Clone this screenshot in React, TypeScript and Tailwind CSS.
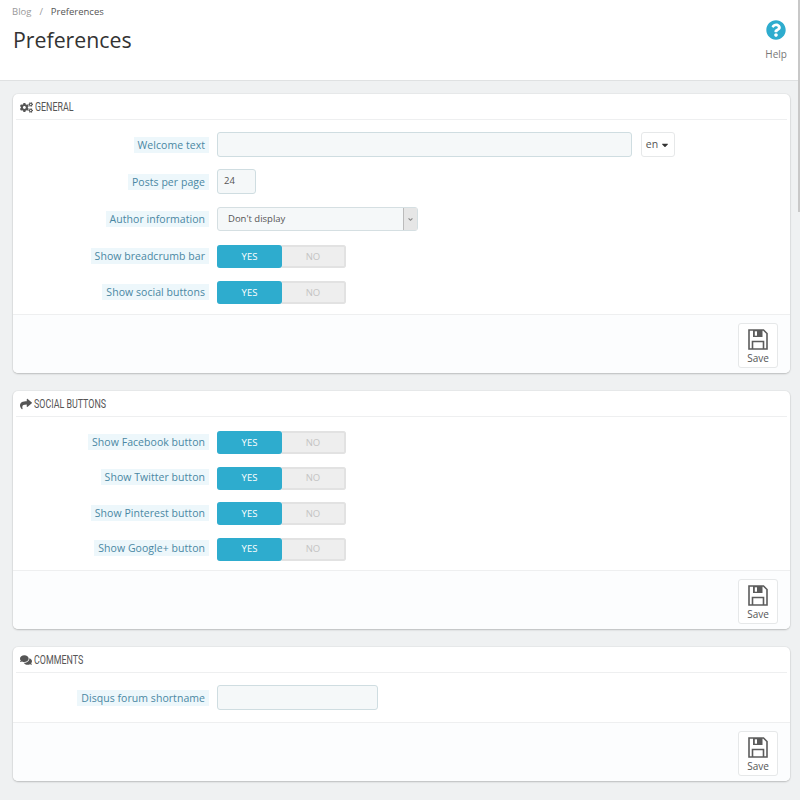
import React from 'react';
import { FaCogs, FaShare, FaComments, FaQuestionCircle, FaCaretDown, FaAngleDown } from 'react-icons/fa';

const Label = ({ children, className = '' }: { children: React.ReactNode; className?: string }) => (
  <div className="w-[196px] shrink-0 flex justify-end">
    <span className={`bg-[#edf7fb] text-[#4a87a3] text-[10.5px] leading-[16px] px-[4px] tracking-[0.05px] ${className}`}>{children}</span>
  </div>
);

const Toggle = () => (
  <div className="ml-[8px] w-[129px] h-[23px] flex rounded-[3px] bg-[#eeeeee] text-[9.5px] font-medium">
    <div className="w-[65px] bg-[#2eacce] text-white rounded-[3px] flex items-center justify-center pt-[1px]">YES</div>
    <div className="flex-1 text-[#c4c4c4] rounded-r-[3px] border-2 border-l-0 border-[#e2e2e2] flex items-center justify-center pt-[1px]">NO</div>
  </div>
);

const Row = ({ label, className, children }: { label: string; className: string; children: React.ReactNode }) => (
  <div className={`flex items-center ${className}`}>
    <Label>{label}</Label>
    {children}
  </div>
);

const ToggleRow = ({ label, className }: { label: string; className: string }) => (
  <div className={`flex items-center ${className}`}>
    <Label className="-translate-y-[1px]">{label}</Label>
    <Toggle />
  </div>
);

// floppy disk, drawn because the icon packages' versions have a round label
const SaveIcon = () => (
  <svg viewBox="0 0 20 21" className="w-[20px] h-[21px] mb-[2px]" fill="none">
    <path d="M1 1H15.5L19 4.5V20H1Z" stroke="#5c5c5c" strokeWidth="1.6" />
    <path d="M5 1H14.5V8H5Z" fill="#5c5c5c" />
    <rect x="6.8" y="2.3" width="2.2" height="4.4" fill="#fff" />
    <path d="M4.5 20V12.5H15.5V20" stroke="#5c5c5c" strokeWidth="1.6" />
  </svg>
);

const Footer = () => (
  <div className="bg-[#fcfdfe] border-t border-[#eeeff0] px-[12px] pt-[8px] pb-[5px] flex justify-end rounded-b-[5px]">
    <button className="w-[40px] h-[45px] bg-white border border-[#e6e8e9] rounded-[3px] flex flex-col items-center text-[#555] text-[10px] leading-[12px] pt-[5px]">
      <SaveIcon />
      <span>Save</span>
    </button>
  </div>
);

const Panel = ({ icon, title, className, children }: { icon: React.ReactNode; title: string; className: string; children: React.ReactNode }) => (
  <section className={`ml-[13px] w-[777px] bg-white rounded-[5px] shadow-[0_1px_2px_rgba(0,0,0,0.2),0_0_0_1px_#e8eaeb] ${className}`}>
    <div className="mx-[3px] px-[4px] h-[26px] border-b border-[#eeeff0] flex items-center gap-[2px] text-[#555] pt-[1px]">
      {icon}
      <h3 className="text-[12px] uppercase font-['Roboto',sans-serif] scale-x-[0.74] origin-left whitespace-nowrap">{title}</h3>
    </div>
    {children}
  </section>
);

const App: React.FC = () => {
  return (
    <div className="w-[800px] h-[800px] overflow-hidden bg-[#eff1f2] font-['Open_Sans',sans-serif] flex">
      <div className="w-[798px] shrink-0">

        {/* Page head */}
        <header className="h-[81px] bg-white border-b border-[#dfe1e2] flex justify-between">
          <div className="pl-[12px] pt-[5px]">
            <div className="text-[9.5px] leading-[14px] text-[#999]">
              Blog <span className="mx-[5.5px]">/</span> <span className="text-[#555]">Preferences</span>
            </div>
            <h1 className="text-[21.3px] leading-[28px] text-[#333] mt-[7px] ml-[1px]">Preferences</h1>
          </div>
          <div className="flex flex-col items-center pt-[20px] pr-[11px] text-[#777] text-[10px]">
            <FaQuestionCircle className="w-[20px] h-[20px] text-[#2eacce] mb-[7px]" />
            <span>Help</span>
          </div>
        </header>

        {/* General */}
        <Panel icon={<FaCogs className="w-[13px] h-[13px]" />} title="General" className="mt-[13px]">
          <div className="pt-[12px] pb-[10px]">
            <Row label="Welcome text" className="mb-[12px]">
              <input className="ml-[8px] w-[415px] h-[25px] bg-[#f5f8f9] border border-[#cfdde1] rounded-[3px]" />
              <div className="ml-[9px] w-[34px] h-[25px] bg-white border border-[#e6e8e9] rounded-[3px] flex items-center justify-center gap-[2px] text-[10.5px] text-[#555]">
                en <FaCaretDown className="w-[10px] h-[10px] text-[#333]" />
              </div>
            </Row>
            <Row label="Posts per page" className="mb-[13px]">
              <div className="ml-[8px] w-[39px] h-[25px] bg-[#f5f8f9] border border-[#cfdde1] rounded-[3px] flex items-center pl-[6px] text-[9.5px] text-[#555]">24</div>
            </Row>
            <Row label="Author information" className="mb-[14px]">
              <div className="ml-[8px] w-[201px] h-[24px] bg-[#f5f8f9] border border-[#d5dfe2] rounded-[3px] flex items-center justify-between text-[9.5px] text-[#555]">
                <span className="pl-[10px]">Don't display</span>
                <div className="w-[14px] h-full bg-[#e6e6e6] border-l border-[#bbb] flex items-center justify-center">
                  <FaAngleDown className="w-[7px] h-[7px] text-[#888]" />
                </div>
              </div>
            </Row>
            <ToggleRow label="Show breadcrumb bar" className="mb-[13px]" />
            <ToggleRow label="Show social buttons" className="" />
          </div>
          <Footer />
        </Panel>

        {/* Social buttons */}
        <Panel icon={<FaShare className="w-[12px] h-[12px]" />} title="Social buttons" className="mt-[18px]">
          <div className="pt-[14px] pb-[9.5px]">
            <ToggleRow label="Show Facebook button" className="mb-[12.5px]" />
            <ToggleRow label="Show Twitter button" className="mb-[12.5px]" />
            <ToggleRow label="Show Pinterest button" className="mb-[12.5px]" />
            <ToggleRow label="Show Google+ button" className="" />
          </div>
          <Footer />
        </Panel>

        {/* Comments */}
        <Panel icon={<FaComments className="w-[12px] h-[12px]" />} title="Comments" className="mt-[18px]">
          <div className="pt-[12px] pb-[12px]">
            <Row label="Disqus forum shortname" className="">
              <input className="ml-[8px] w-[161px] h-[25px] bg-[#f5f8f9] border border-[#cfdde1] rounded-[3px]" />
            </Row>
          </div>
          <Footer />
        </Panel>
      </div>
      <div className="w-[2px] h-[212px] bg-[#c8c8c8]" />
    </div>
  );
};

export default App;
